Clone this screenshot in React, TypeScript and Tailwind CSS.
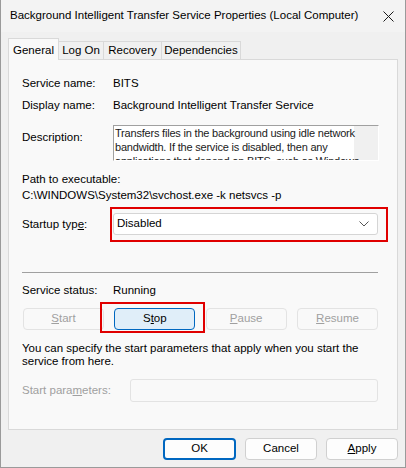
import React from 'react'

const font = {fontFamily: '"Liberation Sans", Arial, sans-serif'}

type BtnProps = {
  children: React.ReactNode
  disabled?: boolean
  active?: boolean
}

const PushButton = ({children, disabled, active}: BtnProps) => {
  let cls = 'border-[#d0d0d0] bg-[#fdfdfd] text-black'
  if (disabled) cls = 'border-[#e3e3e3] bg-[#f9f9f9] text-[#a0a0a0]'
  if (active) cls = 'border-[#0067c0] bg-[#e0eef9] text-black'
  return (
    <div className={`w-[81px] h-[22px] flex items-center justify-center rounded-[4px] border ${cls}`}>
      {children}
    </div>
  )
}

const Label = ({children, gray}: {children: React.ReactNode; gray?: boolean}) => (
  <div className={`w-[91px] shrink-0 leading-[16px] ${gray ? 'text-[#a0a0a0]' : ''}`}>{children}</div>
)

const descLines = [
  'Transfers files in the background using idle network',
  'bandwidth. If the service is disabled, then any',
  'applications that depend on BITS, such as Windows',
]

export default function App() {
  return (
    <div
      style={font}
      className="w-[406px] h-[468px] bg-[#f0f0f0] border-x border-b border-[#9a9a9a] text-[11.5px] text-black flex flex-col overflow-hidden"
    >
      {/* title bar */}
      <div className="h-[32px] flex items-center justify-between pl-[9px] pr-[10px] bg-[#f3f3f3] whitespace-nowrap">
        <span>Background Intelligent Transfer Service Properties (Local Computer)</span>
        <svg width="11" height="11" viewBox="0 0 11 11" className="mr-[1px] shrink-0">
          <path d="M0.5 0.5 L10.5 10.5 M10.5 0.5 L0.5 10.5" stroke="#1a1a1a" strokeWidth="1" />
        </svg>
      </div>

      {/* tabs */}
      <div className="mt-[6px] pl-[7px] flex items-end h-[21px] relative z-10 whitespace-nowrap">
        <div className="h-[22px] flex items-start justify-center pt-[3px] bg-[#f9f9f9] border-x border-t border-[#d9d9d9] -mb-[1px] w-[51px]">
          General
        </div>
        <div className="h-[18px] flex items-center justify-center bg-[#f0f0f0] border-t border-r border-[#d9d9d9] w-[45px]">
          Log On
        </div>
        <div className="h-[18px] flex items-center justify-center bg-[#f0f0f0] border-t border-r border-[#d9d9d9] w-[58px]">
          Recovery
        </div>
        <div className="h-[18px] flex items-center justify-center bg-[#f0f0f0] border-t border-r border-[#d9d9d9] w-[79px]">
          Dependencies
        </div>
      </div>

      {/* panel */}
      <div className="ml-[7px] w-[390px] h-[371px] bg-[#f9f9f9] border border-[#d9d9d9] pl-[13px] pr-[3px] flex flex-col">
        <div className="mt-[15px] flex">
          <Label>Service name:</Label>
          <div className="leading-[16px]">BITS</div>
        </div>
        <div className="mt-[6px] flex">
          <Label>Display name:</Label>
          <div className="leading-[16px]">Background Intelligent Transfer Service</div>
        </div>
        <div className="mt-[12px] flex">
          <div className="w-[91px] shrink-0 leading-[16px] pt-[4px]">Description:</div>
          <div className="relative w-[266px] h-[36px] border border-t-[#a0a0a0] border-l-[#a0a0a0] border-r-white border-b-white bg-white overflow-hidden">
            <div className="absolute right-0 top-0 bottom-0 w-[24px] bg-[#f0f0f0]" />
            <div className="relative pl-[1px] text-[11px] tracking-[-0.2px] leading-[14px] text-[#1a1a1a] whitespace-nowrap">
              {descLines.map((line) => (
                <div key={line}>{line}</div>
              ))}
            </div>
          </div>
        </div>
        <div className="mt-[10px] leading-[16px]">Path to executable:</div>
        <div className="leading-[16px]">C:\WINDOWS\System32\svchost.exe -k netsvcs -p</div>

        <div className="mt-[10px] flex items-center">
          <Label>
            Startup typ<span className="underline">e</span>:
          </Label>
          <div className="relative">
            <div className="w-[265px] h-[22px] bg-white border border-[#d5d5d5] rounded-[3px] flex items-center justify-between pl-[3px] pr-[8px]">
              <span>Disabled</span>
              <svg width="10" height="6" viewBox="0 0 10 6">
                <path d="M0.5 0.5 L5 5 L9.5 0.5" fill="none" stroke="#555" strokeWidth="1" />
              </svg>
            </div>
            <div className="absolute left-[-3px] top-[-6px] w-[278px] h-[35px] border-2 border-[#e00000]" />
          </div>
        </div>

        <div className="mt-[37px] h-[1px] bg-[#a0a0a0] w-[356px]" />

        <div className="mt-[9px] flex">
          <Label>Service status:</Label>
          <div className="leading-[16px]">Running</div>
        </div>

        <div className="mt-[10px] flex justify-between w-[356px] pl-[1px]">
          <PushButton disabled>
            <span className="underline">S</span>tart
          </PushButton>
          <div className="relative">
            <PushButton active>
              S<span className="underline">t</span>op
            </PushButton>
            <div className="absolute left-[-14px] top-[-6px] w-[105px] h-[31px] border-2 border-[#e00000]" />
          </div>
          <PushButton disabled>
            <span className="underline">P</span>ause
          </PushButton>
          <PushButton disabled>
            <span className="underline">R</span>esume
          </PushButton>
        </div>

        <div className="mt-[12px] leading-[13px] w-[370px]">
          You can specify the start parameters that apply when you start the service from here.
        </div>

        <div className="mt-[11px] flex items-center">
          <div className="w-[108px] shrink-0 text-[#a0a0a0]">
            Start para<span className="underline">m</span>eters:
          </div>
          <div className="w-[248px] h-[23px] border border-[#e3e3e3] rounded-[3px] bg-[#f9f9f9]" />
        </div>
      </div>

      {/* dialog buttons */}
      <div className="mt-[8px] flex justify-end gap-[9px] pr-[7px]">
        <div className="w-[73px] h-[22px] rounded-[4px] border-2 border-[#0067c0] bg-[#fdfdfd] flex items-center justify-center">
          OK
        </div>
        <div className="w-[72px] h-[22px] rounded-[4px] border border-[#d0d0d0] bg-[#fdfdfd] flex items-center justify-center">
          Cancel
        </div>
        <div className="w-[72px] h-[22px] rounded-[4px] border border-[#d0d0d0] bg-[#fdfdfd] flex items-center justify-center">
          <span className="underline">A</span>pply
        </div>
      </div>
    </div>
  )
}
